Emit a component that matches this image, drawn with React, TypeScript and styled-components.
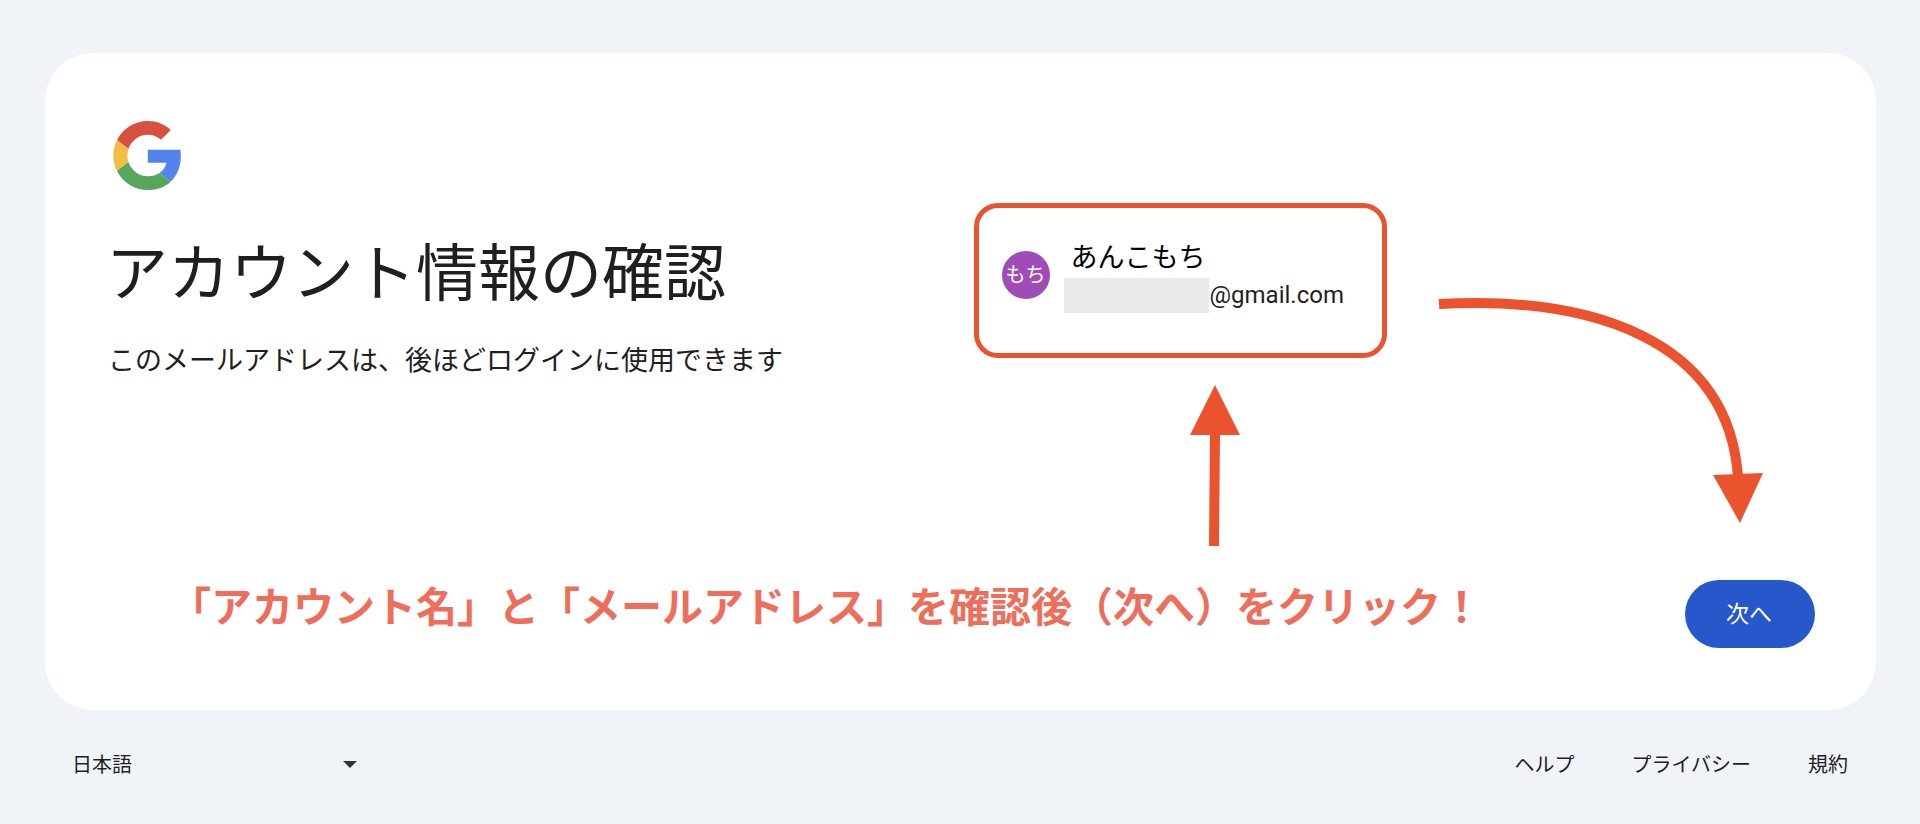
import React from "react";
import styled, { createGlobalStyle } from "styled-components";

const accent = "#ea532d";
const ink = "#1f1f1f";

const GlobalStyle = createGlobalStyle`
  *, *::before, *::after { box-sizing: border-box; }
  body {
    margin: 0;
    background: #f0f3f8;
    color: ${ink};
    font-family: Roboto, "Noto Sans CJK JP", sans-serif;
  }
`;

const Page = styled.div`
  min-height: 100vh;
  display: flex;
  flex-direction: column;
  padding: 53px 44px 0 45px;
`;

const Card = styled.main`
  background: #fff;
  border-radius: 48px;
  padding: 68px 61px 62px 61px;
`;

const Columns = styled.div`
  display: grid;
  grid-template-columns: 1fr 1fr;
  column-gap: 26px;
`;

const Logo = styled.svg`
  display: block;
  width: 75px;
  height: 69px;
`;

const Title = styled.h1`
  margin: 43px 0 0;
  font: 400 62px/72px "Noto Sans CJK JP", sans-serif;
  white-space: nowrap;
`;

const Lead = styled.p`
  margin: 36px 0 0;
  padding-left: 2px;
  font-size: 27px;
  line-height: 36px;
  font-family: "Noto Sans CJK JP", sans-serif;
  white-space: nowrap;
`;

const Review = styled.div`
  display: flex;
  align-items: flex-start;
  padding-top: 82px;
`;

const Account = styled.section`
  display: flex;
  align-items: flex-start;
  width: 413px;
  height: 155px;
  padding: 31px 20px 31px 23px;
  border: 5px solid ${accent};
  border-radius: 24px;
`;

const Avatar = styled.div`
  flex: none;
  width: 48px;
  height: 48px;
  margin-top: 12px;
  border-radius: 50%;
  background: #9f4cb8;
  color: #fff;
  font: 400 20px/46px "Noto Sans CJK JP", sans-serif;
  text-align: center;
`;

const Details = styled.div`
  margin-left: 14px;
`;

const Name = styled.div`
  padding-left: 7px;
  font: 400 27px/34px "Noto Sans CJK JP", sans-serif;
  color: #000;
`;

const Email = styled.div`
  display: flex;
  align-items: center;
  gap: 1px;
  height: 35px;
  margin-top: 5px;
  font-size: 24px;
  line-height: 35px;
`;

const Redacted = styled.span`
  width: 145px;
  height: 35px;
  background: #eaeaea;
`;

const UpArrow = styled.svg`
  display: block;
  width: 50px;
  height: 161px;
  margin: 27px 0 0 216px;
`;

const CurvedArrow = styled.svg`
  flex: none;
  width: 326px;
  height: 228px;
  margin: 94px 0 0 51px;
`;

const Actions = styled.div`
  display: flex;
  justify-content: space-between;
  align-items: flex-start;
  margin-top: 34px;
  padding-left: 64px;
`;

const Caption = styled.p`
  margin: 0;
  color: #ee6e5b;
  font: 700 41px/48px "Noto Sans CJK JP", sans-serif;
  white-space: nowrap;
`;

const NextButton = styled.button`
  flex: none;
  width: 130px;
  height: 68px;
  padding: 0 2px 4px 0;
  border: 0;
  border-radius: 34px;
  background: #2657cb;
  color: #fff;
  font: 400 23px/60px "Noto Sans CJK JP", sans-serif;
  cursor: pointer;
`;

const Footer = styled.footer`
  display: flex;
  justify-content: space-between;
  align-items: center;
  padding: 37px 28px 24px 27px;
  font: 400 20px/34px "Noto Sans CJK JP", sans-serif;
`;

const LanguagePicker = styled.div`
  position: relative;
  width: 285px;
`;

const LanguageSelect = styled.select`
  appearance: none;
  width: 100%;
  height: 34px;
  padding: 0;
  border: 0;
  background: transparent;
  color: ${ink};
  font: inherit;
`;

const Caret = styled.svg`
  position: absolute;
  top: 14px;
  right: 0;
  width: 14px;
  height: 7px;
  pointer-events: none;
`;

const Links = styled.nav`
  display: flex;
  gap: 57px;
`;

const FooterLink = styled.a`
  color: ${ink};
  text-decoration: none;
`;

export default function App() {
  return (
    <>
      <GlobalStyle />
      <Page>
        <Card>
          <Columns>
            <div>
              <Logo viewBox="-5 0 52 48" role="img" aria-label="Google">
                <path fill="#d85140" d="M24 9.5c3.54 0 6.71 1.22 9.21 3.6l6.85-6.85C35.9 2.38 30.47 0 24 0 14.62 0 6.51 5.38 2.56 13.22l7.98 6.19C12.43 13.72 17.74 9.5 24 9.5z" />
                <path fill="#5383ec" d="M46.98 24.55c0-1.57-.15-3.09-.38-4.55H24v9.02h12.94c-.58 2.96-2.26 5.48-4.78 7.18l7.73 6c4.51-4.18 7.09-10.36 7.09-17.65z" />
                <path fill="#f1bd42" d="M10.53 28.59c-.48-1.45-.76-2.99-.76-4.59s.27-3.14.76-4.59l-7.98-6.19C.92 16.46 0 20.12 0 24c0 3.88.92 7.54 2.56 10.78l7.97-6.19z" />
                <path fill="#58a55c" d="M24 48c6.48 0 11.93-2.13 15.89-5.81l-7.73-6c-2.15 1.45-4.92 2.3-8.16 2.3-6.26 0-11.57-4.22-13.47-9.91l-7.98 6.19C6.51 42.62 14.62 48 24 48z" />
              </Logo>
              <Title>アカウント情報の確認</Title>
              <Lead>このメールアドレスは、後ほどログインに使用できます</Lead>
            </div>
            <Review>
              <div>
                <Account aria-label="アカウント">
                  <Avatar>もち</Avatar>
                  <Details>
                    <Name>あんこもち</Name>
                    <Email>
                      <Redacted />
                      <span>@gmail.com</span>
                    </Email>
                  </Details>
                </Account>
                <UpArrow viewBox="0 0 50 161" fill={accent} aria-hidden="true">
                  <path d="M25 0 50 50H30L29 161H19L20 50H0Z" />
                </UpArrow>
              </div>
              <CurvedArrow viewBox="0 0 326 228" aria-hidden="true">
                <path d="M1 7C150 -1 290 40 300 180" fill="none" stroke={accent} strokeWidth="10" />
                <path d="M275 178 325 176 302 226Z" fill={accent} />
              </CurvedArrow>
            </Review>
          </Columns>
          <Actions>
            <Caption>「アカウント名」と「メールアドレス」を確認後（次へ）をクリック！</Caption>
            <NextButton type="button">次へ</NextButton>
          </Actions>
        </Card>
        <Footer>
          <LanguagePicker>
            <LanguageSelect aria-label="言語" defaultValue="ja">
              <option value="ja">日本語</option>
            </LanguageSelect>
            <Caret viewBox="0 0 14 7" aria-hidden="true">
              <path d="M0 0h14L7 7z" fill="#333" />
            </Caret>
          </LanguagePicker>
          <Links>
            <FooterLink href="#help">ヘルプ</FooterLink>
            <FooterLink href="#privacy">プライバシー</FooterLink>
            <FooterLink href="#terms">規約</FooterLink>
          </Links>
        </Footer>
      </Page>
    </>
  );
}
